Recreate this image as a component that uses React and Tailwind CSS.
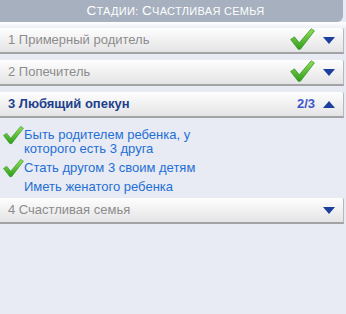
import React from "react";

const Check = ({ className }) => (
  <svg viewBox="0 0 24 22" className={className}>
    <defs>
      <linearGradient id="chk" x1="0" y1="0" x2="0" y2="1">
        <stop offset="0" stopColor="#8fe05a" />
        <stop offset="1" stopColor="#2f9e1c" />
      </linearGradient>
    </defs>
    <path
      d="M1.5 11.5 L5 9 L9.5 14.5 L20.5 1.5 L23.5 3.5 L10.5 20.5 L8.5 20.5 Z"
      fill="url(#chk)"
      stroke="#2b8a1a"
      strokeWidth="0.6"
      strokeLinejoin="round"
    />
  </svg>
);

const Arrow = ({ up }) => (
  <svg viewBox="0 0 12 7" className="w-[12px] h-[7px]">
    <path d={up ? "M0 7 L6 0 L12 7 Z" : "M0 0 L12 0 L6 7 Z"} fill="#1c3f9e" />
  </svg>
);

const Bar = ({ title, done, open, progress }) => (
  <div className="h-[26px] mr-[2px] flex items-center pl-[8px] pr-[8px] bg-gradient-to-b from-[#fefefe] to-[#e4e4e6] border-b-2 border-r border-b-[#a3a3a6] border-r-[#b8b8bc] rounded-tr-[2px]">
    <span
      className={
        open
          ? "flex-1 text-[13px] font-bold text-[#213f8c]"
          : "flex-1 text-[13px] text-[#8c8c8c]"
      }
    >
      {title}
    </span>
    {progress && (
      <span className="text-[13px] font-bold text-[#3e57c8] mr-[8px]">{progress}</span>
    )}
    {done && <Check className="w-[26px] h-[24px] mr-[8px] -mt-[2px]" />}
    <Arrow up={open} />
  </div>
);

const Goal = ({ text, done }) => (
  <div className="flex items-start">
    <div className="w-[24px] h-[14px] shrink-0 flex items-start">
      {done && <Check className="w-[22px] h-[20px] shrink-0 mt-[-3px] ml-[2px]" />}
    </div>
    <span className="text-[13px] leading-[14px] font-medium text-[#1f6fd6]">{text}</span>
  </div>
);

export default function App() {
  return (
    <div
      className="w-[346px] h-[314px] bg-[#e8ebf3] flex flex-col"
      style={{ fontFamily: "'Liberation Sans', Arial, sans-serif" }}
    >
      <div className="h-[22px] shrink-0 mr-[3px] bg-[#a6b0be] rounded-br-[6px] flex items-center justify-center pl-[8px]">
        <span className="text-white text-[11px] tracking-[0.3px] uppercase">
          <span className="text-[13.5px]">С</span>тадии: <span className="text-[13.5px]">С</span>частливая семья
        </span>
      </div>
      <div className="h-[6px] shrink-0 bg-gradient-to-b from-[#ffffff] to-[#eef0f5]" />
      <div className="flex flex-col gap-[6px]">
        <Bar title="1 Примерный родитель" done />
        <Bar title="2 Попечитель" done />
        <Bar title="3 Любящий опекун" open progress="2/3" />
      </div>
      <div className="flex flex-col gap-[5px] pt-[10px] pb-[4px]">
        <Goal done text={<>Быть родителем ребенка, у<br />которого есть 3 друга</>} />
        <Goal done text="Стать другом 3 своим детям" />
        <Goal text="Иметь женатого ребенка" />
      </div>
      <Bar title="4 Счастливая семья" />
    </div>
  );
}
